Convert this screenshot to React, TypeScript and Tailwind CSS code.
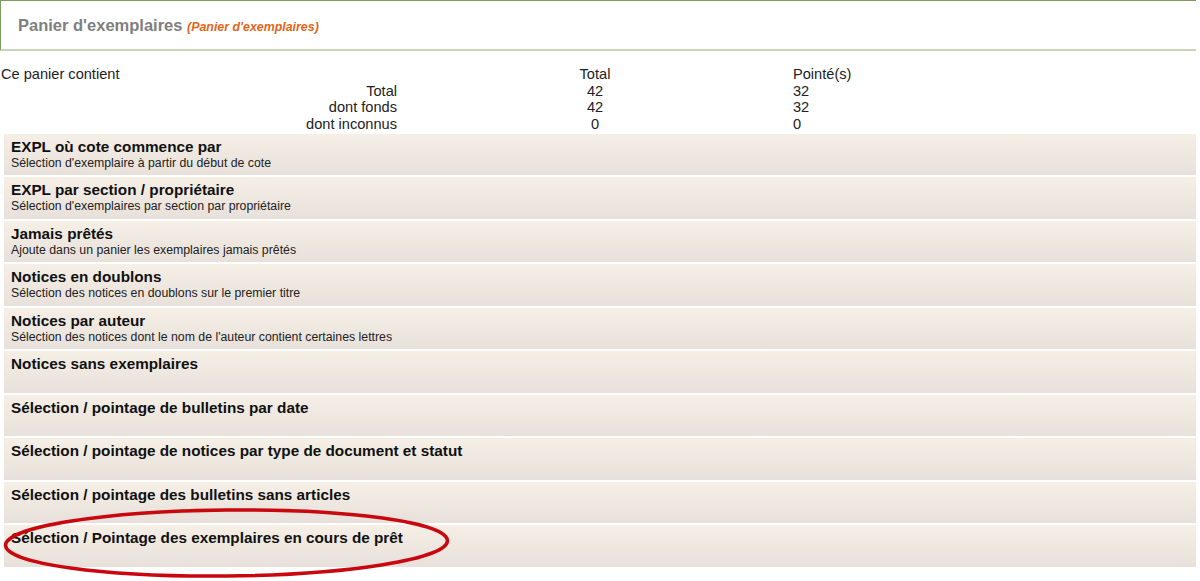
import React from "react";

const procs: { title: string; comment?: string }[] = [
  { title: "EXPL où cote commence par", comment: "Sélection d'exemplaire à partir du début de cote" },
  { title: "EXPL par section / propriétaire", comment: "Sélection d'exemplaires par section par propriétaire" },
  { title: "Jamais prêtés", comment: "Ajoute dans un panier les exemplaires jamais prêtés" },
  { title: "Notices en doublons", comment: "Sélection des notices en doublons sur le premier titre" },
  { title: "Notices par auteur", comment: "Sélection des notices dont le nom de l'auteur contient certaines lettres" },
  { title: "Notices sans exemplaires" },
  { title: "Sélection / pointage de bulletins par date" },
  { title: "Sélection / pointage de notices par type de document et statut" },
  { title: "Sélection / pointage des bulletins sans articles" },
  { title: "Sélection / Pointage des exemplaires en cours de prêt" },
];

const counts = [
  { label: "Total", total: 42, checked: 32 },
  { label: "dont fonds", total: 42, checked: 32 },
  { label: "dont inconnus", total: 0, checked: 0 },
];

export default function App() {
  return (
    <div className="relative h-[581px] w-[1200px] overflow-hidden bg-white font-['Liberation_Sans',Arial,sans-serif] text-[#111]">
      {/* page header */}
      <div className="flex h-[51px] w-[1196px] items-center border-t border-l border-t-[#7d9b5e] border-l-[#7d9b5e] border-b-2 border-b-[#c6d5b6] pl-[17px]">
        <h1 className="text-[16.5px] font-bold text-[#7f7f7f]">
          Panier d'exemplaires{" "}
          <span className="text-[12.4px] italic text-[#e2661a]">(Panier d'exemplaires)</span>
        </h1>
      </div>

      {/* basket counters */}
      <div className="mt-[15px] grid w-[1196px] grid-cols-[400px_390px_1fr] text-[14.6px] leading-[16.7px] text-[#222]">
        <div className="pl-[1px]">Ce panier contient</div>
        <div className="text-center">Total</div>
        <div className="pl-[3px]">Pointé(s)</div>
        {counts.map((c) => (
          <React.Fragment key={c.label}>
            <div className="pr-[3px] text-right">{c.label}</div>
            <div className="text-center">{c.total}</div>
            <div className="pl-[3px]">{c.checked}</div>
          </React.Fragment>
        ))}
      </div>

      {/* procedures list */}
      <div className="ml-[4px] mt-[1px] flex w-[1192px] flex-col gap-[2px]">
        {procs.map((p) => (
          <div
            key={p.title}
            className="h-[41.5px] bg-gradient-to-b from-[#f5efe6] to-[#e8e1db] pl-[7px] pt-[4px]"
          >
            <div className="text-[15.3px] font-bold leading-[18px] text-[#111]">{p.title}</div>
            {p.comment && (
              <div className="text-[12.3px] leading-[14px] text-[#222]">{p.comment}</div>
            )}
          </div>
        ))}
      </div>

      {/* red annotation circle */}
      <svg
        className="pointer-events-none absolute left-0 top-0"
        width="1200"
        height="581"
        viewBox="0 0 1200 581"
      >
        <ellipse
          cx="226.5"
          cy="543"
          rx="221"
          ry="33"
          fill="none"
          stroke="#c8070f"
          strokeWidth="3.5"
          transform="rotate(-0.6 226.5 543)"
        />
      </svg>
    </div>
  );
}
